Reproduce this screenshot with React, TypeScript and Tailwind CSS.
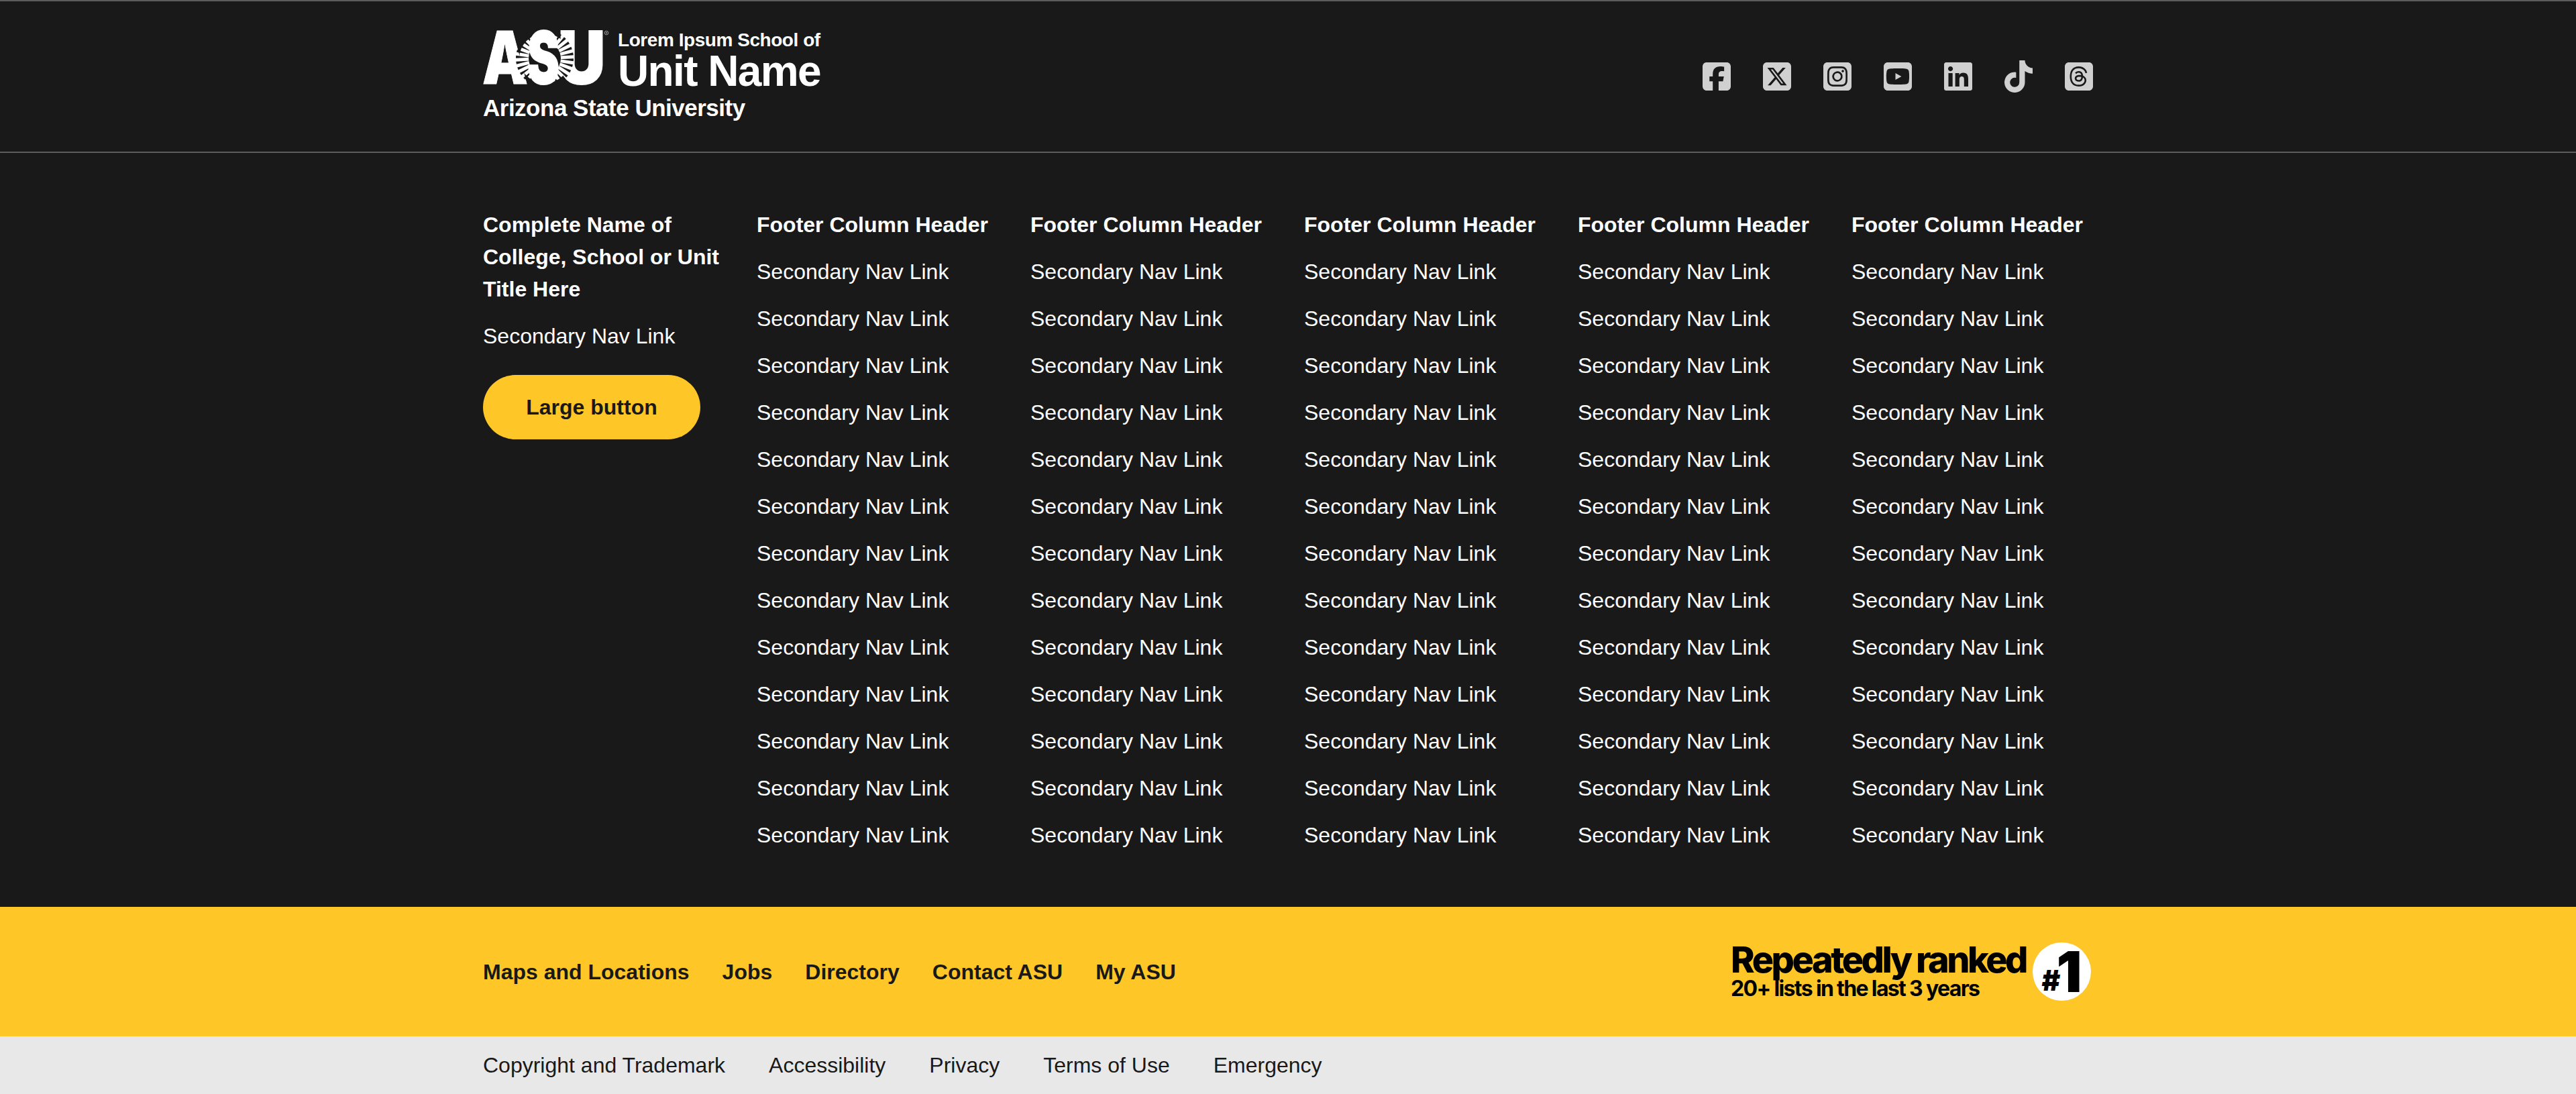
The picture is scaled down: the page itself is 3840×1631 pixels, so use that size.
import { FaSquareFacebook, FaSquareXTwitter, FaSquareInstagram, FaSquareYoutube, FaLinkedin, FaTiktok, FaSquareThreads } from "react-icons/fa6";

const socials = [FaSquareFacebook, FaSquareXTwitter, FaSquareInstagram, FaSquareYoutube, FaLinkedin, FaTiktok, FaSquareThreads];
const columns = [0, 1, 2, 3, 4];
const links = Array.from({ length: 13 }, (_, i) => i);
const rayAngles = Array.from({ length: 30 }, (_, i) => i * 12 + 3);

function AsuMark() {
  const cx = 92;
  const cy = 41;
  return (
    <svg width="184" height="79" viewBox="0 0 184 79" className="shrink-0 overflow-visible">
      <g fill="#fff" stroke="#fff" fontFamily="Inter, 'Liberation Sans', sans-serif" fontWeight="900">
        <text x="-1" y="79" fontSize="108" strokeWidth="1" textLength="68" lengthAdjust="spacingAndGlyphs">A</text>
        <text x="112" y="79" fontSize="108" strokeWidth="2" textLength="70" lengthAdjust="spacingAndGlyphs">U</text>
      </g>
      <ellipse cx={cx} cy={cy} rx="38" ry="37" fill="#fff" />
      <circle cx={cx} cy={cy} r="24" fill="#191919" />
      {rayAngles.map((deg) => {
        const a = (deg * Math.PI) / 180;
        const t = 0.045;
        const inner = 22;
        const outer = 43;
        const points = [
          [cx + Math.cos(a) * inner, cy + Math.sin(a) * inner],
          [cx + Math.cos(a + t) * outer, cy + Math.sin(a + t) * outer],
          [cx + Math.cos(a - t) * outer, cy + Math.sin(a - t) * outer],
        ]
          .map((p) => p.join(","))
          .join(" ");
        return <polygon key={deg} points={points} fill="#191919" />;
      })}
      <text x="66" y="79" fontSize="108" fill="#fff" stroke="#fff" strokeWidth="2" fontFamily="Inter, 'Liberation Sans', sans-serif" fontWeight="900" textLength="48" lengthAdjust="spacingAndGlyphs">S</text>
      <circle cx="184" cy="3" r="2.8" fill="none" stroke="#bbb" strokeWidth="0.8" />
      <circle cx="184" cy="3" r="0.9" fill="#bbb" />
    </svg>
  );
}

function Logo() {
  return (
    <div className="flex flex-col font-['Liberation_Sans',Arial,sans-serif] font-bold text-white">
      <div className="flex gap-[17px]">
        <AsuMark />
        <div className="flex flex-col">
          <span className="text-[28px] leading-[28px] tracking-[-0.45px] whitespace-nowrap">Lorem Ipsum School of</span>
          <span className="mt-[3px] text-[64px] leading-[58px] tracking-[-1.6px] whitespace-nowrap">Unit Name</span>
        </div>
      </div>
      <span className="mt-[7px] text-[35px] leading-[38px] tracking-[-0.5px] whitespace-nowrap">Arizona State University</span>
    </div>
  );
}

function Badge() {
  return (
    <div className="mr-[3px] flex items-center gap-[10px] font-['Inter',sans-serif] text-black">
      <div className="mt-[-4px] flex flex-col">
        <span className="text-[54px] leading-[54px] font-extrabold tracking-[-3.55px] whitespace-nowrap">Repeatedly ranked</span>
        <span className="text-[32px] leading-[32px] font-bold tracking-[-1.65px] whitespace-nowrap">20+ lists in the last 3 years</span>
      </div>
      <div className="flex h-[87px] w-[87px] items-end justify-center rounded-full bg-white pb-[6px] font-black">
        <span className="mb-[3px] text-[42px] leading-[42px] tracking-[-1px]">#</span>
        <span className="ml-[-5px] text-[84px] leading-[74px]">1</span>
      </div>
    </div>
  );
}

export default function App() {
  return (
    <footer className="flex min-h-[1631px] flex-col bg-[#191919] font-['Liberation_Sans',Arial,sans-serif] text-[32px] leading-[48px] text-white">
      <div className="border-y-2 border-[#5c5c5c]">
        <div className="mx-auto flex h-[224px] w-[2400px] items-center justify-between pb-[2px]">
          <Logo />
          <div className="mr-[-3px] mt-[2px] flex items-center gap-[42px] text-[#d0d0d0]">
            {socials.map((Icon, i) => (
              <Icon key={i} size={48} />
            ))}
          </div>
        </div>
      </div>

      <div className="mx-auto grid w-[2400px] grid-cols-6 gap-x-[48px] pt-[83px] pb-[83px]">
        <div className="flex flex-col items-start">
          <h2 className="font-bold">Complete Name of College, School or Unit Title Here</h2>
          <a className="mt-[22px] whitespace-nowrap">Secondary Nav Link</a>
          <button className="mt-[34px] h-[96px] w-[324px] rounded-full bg-[#ffc627] font-bold text-[#191919]">Large button</button>
        </div>
        {columns.map((c) => (
          <div key={c} className="flex flex-col gap-[22px]">
            <h3 className="font-bold whitespace-nowrap">Footer Column Header</h3>
            {links.map((l) => (
              <a key={l} className="whitespace-nowrap">Secondary Nav Link</a>
            ))}
          </div>
        ))}
      </div>

      <div className="bg-[#ffc627] text-[#191919]">
        <div className="mx-auto flex h-[193px] w-[2400px] items-center justify-between">
          <nav className="flex gap-[49px] font-bold">
            <a>Maps and Locations</a>
            <a>Jobs</a>
            <a>Directory</a>
            <a>Contact ASU</a>
            <a>My ASU</a>
          </nav>
          <Badge />
        </div>
      </div>

      <div className="grow bg-[#e8e8e8] text-[#191919]">
        <nav className="mx-auto flex h-[86px] w-[2400px] items-center gap-[65px]">
          <a>Copyright and Trademark</a>
          <a>Accessibility</a>
          <a>Privacy</a>
          <a>Terms of Use</a>
          <a>Emergency</a>
        </nav>
      </div>
    </footer>
  );
}
